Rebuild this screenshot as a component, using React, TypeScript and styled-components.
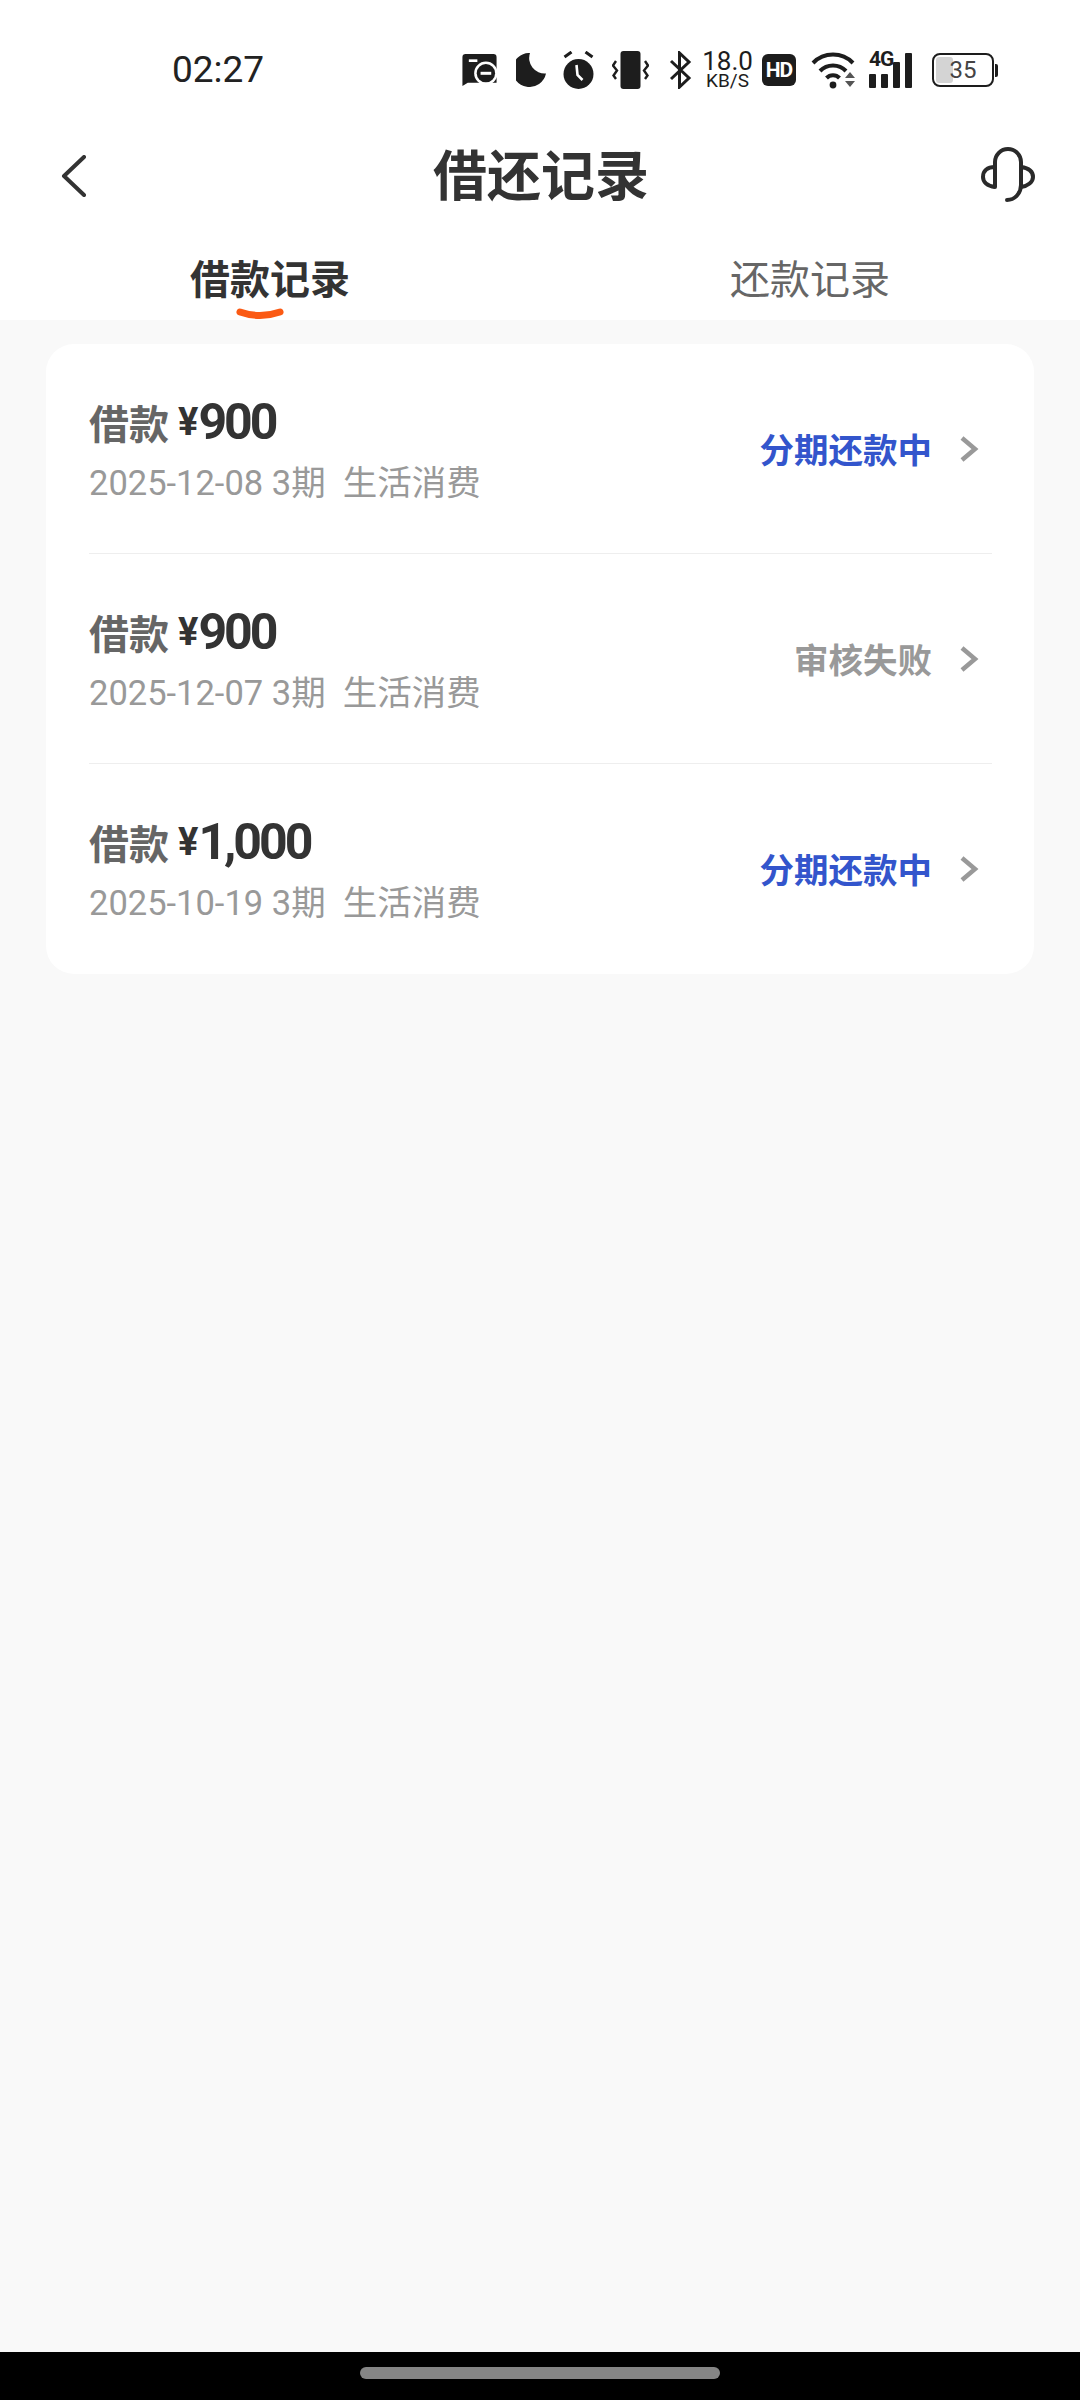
import styled, { createGlobalStyle } from 'styled-components';

const records = [
  { amount: '900', date: '2025-12-08', status: '分期还款中', failed: false },
  { amount: '900', date: '2025-12-07', status: '审核失败', failed: true },
  { amount: '1,000', date: '2025-10-19', status: '分期还款中', failed: false },
];

const App = () => (
  <Page>
    <GlobalStyle />
    <Header>
      <StatusBar>
        <Clock>02:27</Clock>
        <StatusIcons>
          <Slot $gap={0}>
            <svg width="35" height="32" viewBox="0 0 32 30">
              <path d="M3 0H29a3 3 0 0 1 3 3V27H5L0 30V3a3 3 0 0 1 3-3Z" fill="#1d1d1d" />
              <rect x="6" y="5" width="8" height="2.5" fill="#fff" />
              <circle cx="22" cy="18" r="11" fill="#fff" />
              <circle cx="22" cy="18" r="8.6" fill="#1d1d1d" />
              <rect x="17" y="16.7" width="10" height="2.8" fill="#fff" />
            </svg>
          </Slot>
          <Slot $gap={19}>
            <svg width="30" height="34" viewBox="0 0 30 34">
              <path d="M14 0A17 17 0 1 0 30 20.5A15.5 15.5 0 0 1 14 0Z" fill="#1d1d1d" />
            </svg>
          </Slot>
          <Slot $gap={16}>
            <svg width="33" height="38" viewBox="0 0 32 38">
              <circle cx="16" cy="23" r="15" fill="#1d1d1d" />
              <path d="M2 6 9 1M30 6 23 1" stroke="#1d1d1d" strokeWidth="3" />
              <path d="M14 14 15 24 20 29" stroke="#fff" strokeWidth="2.6" fill="none" />
            </svg>
          </Slot>
          <Slot $gap={17}>
            <svg width="37" height="38" viewBox="0 0 37 38">
              <rect x="8.5" y="0" width="20" height="38" rx="3" fill="#1d1d1d" />
              <path d="M4 10 1 14.500 5 19.500 1.500 24.500 4 28M33 10 36 14.500 32 19.500 35.500 24.500 33 28" stroke="#1d1d1d" strokeWidth="2.400" fill="none" />
            </svg>
          </Slot>
          <Slot $gap={20}>
            <svg width="23" height="38" viewBox="0 0 21 38">
              <path d="M1 10 19 27 9.500 36V2L19 11 1 28" stroke="#1d1d1d" strokeWidth="3" fill="none" />
            </svg>
          </Slot>
          <Slot $gap={12}>
            <Speed>
              <SpeedValue>18.0</SpeedValue>
              <SpeedUnit>KB/S</SpeedUnit>
            </Speed>
          </Slot>
          <Slot $gap={11}>
            <HdBadge>HD</HdBadge>
          </Slot>
          <Slot $gap={15}>
            <svg width="46" height="38" viewBox="0 0 44 38">
              <path d="M1 12A28 28 0 0 1 41 12M8 20A18 18 0 0 1 34 20M14.500 27A9 9 0 0 1 27.500 27" stroke="#1d1d1d" strokeWidth="4" fill="none" />
              <circle cx="21" cy="34" r="3.400" fill="#1d1d1d" />
              <path d="M33 27 38 21 43 27ZM33 30H43L38 36Z" fill="#555" />
            </svg>
          </Slot>
          <Slot $gap={12}>
            <Signal>
              <SignalLabel>4G</SignalLabel>
              <SignalBar $height={14} />
              <SignalBar $height={14} />
              <SignalBar $height={26} />
              <SignalBar $height={35} />
            </Signal>
          </Slot>
          <Slot $gap={17}>
            <BatteryBody>
              <BatteryFill />
              <BatteryText>35</BatteryText>
            </BatteryBody>
            <BatteryNub />
          </Slot>
        </StatusIcons>
      </StatusBar>
      <NavBar>
        <BackIcon width="26" height="42" viewBox="0 0 26 42">
          <path d="M23 2 3 21 23 40" stroke="#333" strokeWidth="4" strokeLinecap="round" strokeLinejoin="round" fill="none" />
        </BackIcon>
        <Title>借还记录</Title>
        <HeadsetIcon width="56" height="56" viewBox="0 0 54 56">
          <path d="M14 40V15A13 13 0 0 1 40 15V38C40 46 34 53 26 53" stroke="#2a2a2a" strokeWidth="4" strokeLinecap="round" fill="none" />
          <path d="M14 20C6 20 2 24 2 30C2 35 6 39 14 40M40 20C47 21 52 24 52 30C52 35 47 39 40 40" stroke="#2a2a2a" strokeWidth="4" fill="none" />
        </HeadsetIcon>
      </NavBar>
      <Tabs>
        <Tab>
          <TabLabel $active>
            借款记录
            <TabMark width="48" height="14" viewBox="0 0 48 14">
              <path d="M4 4Q24 11 44 4" stroke="#fb5a14" strokeWidth="7" strokeLinecap="round" fill="none" />
            </TabMark>
          </TabLabel>
        </Tab>
        <Tab>
          <TabLabel>还款记录</TabLabel>
        </Tab>
      </Tabs>
    </Header>
    <Content>
      <Card>
        {records.map((record) => (
          <Row key={record.date}>
            <RowInfo>
              <RowTitle>
                <RowKind>借款</RowKind>
                <Currency>¥</Currency>
                <Amount>{record.amount}</Amount>
              </RowTitle>
              <RowMeta>{record.date} 3期&nbsp;&nbsp;生活消费</RowMeta>
            </RowInfo>
            <RowSide>
              <RowStatus $failed={record.failed}>{record.status}</RowStatus>
              <svg width="20" height="28" viewBox="0 0 20 28">
                <path d="M3 3 16 14 3 25" stroke="#999" strokeWidth="4.500" fill="none" />
              </svg>
            </RowSide>
          </Row>
        ))}
      </Card>
    </Content>
    <BottomBar>
      <HomePill />
    </BottomBar>
  </Page>
);

const GlobalStyle = createGlobalStyle`
  body {
    margin: 0;
    background: #f9f9f9;
    font-family: Roboto, 'Noto Sans CJK SC', sans-serif;
  }
`;

const Page = styled.div`
  width: 1080px;
  height: 2400px;
  display: flex;
  flex-direction: column;
  background: #f9f9f9;
  overflow: hidden;
`;

const Header = styled.header`
  background: #fff;
`;

const StatusBar = styled.div`
  height: 110px;
  box-sizing: border-box;
  padding: 30px 82px 0 172px;
  display: flex;
  align-items: center;
  justify-content: space-between;
`;

const Clock = styled.div`
  font-size: 37px;
  color: #222;
  line-height: 40px;
`;

const StatusIcons = styled.div`
  display: flex;
  align-items: center;
`;

const Slot = styled.div<{ $gap: number }>`
  display: flex;
  align-items: center;
  gap: 1px;
  margin-left: ${(p) => p.$gap}px;
`;

const Speed = styled.div`
  display: flex;
  flex-direction: column;
  align-items: center;
  color: #1d1d1d;
  width: 47px;
`;

const SpeedValue = styled.span`
  font-size: 26px;
  line-height: 22px;
`;

const SpeedUnit = styled.span`
  font-size: 19px;
  line-height: 18px;
`;

const HdBadge = styled.div`
  width: 34px;
  height: 32px;
  border-radius: 6px;
  background: #1d1d1d;
  color: #fff;
  font-size: 21px;
  font-weight: 700;
  letter-spacing: -1px;
  display: flex;
  align-items: center;
  justify-content: center;
`;

const Signal = styled.div`
  position: relative;
  width: 46px;
  height: 36px;
  display: flex;
  align-items: flex-end;
  gap: 5px;
`;

const SignalLabel = styled.span`
  position: absolute;
  left: 0;
  top: -3px;
  font-size: 21px;
  font-weight: 700;
  line-height: 20px;
  letter-spacing: -1px;
  color: #1d1d1d;
`;

const SignalBar = styled.span<{ $height: number }>`
  width: 7px;
  height: ${(p) => p.$height}px;
  border-radius: 1px;
  background: #1d1d1d;
`;

const BatteryBody = styled.div`
  position: relative;
  width: 62px;
  height: 34px;
  box-sizing: border-box;
  border: 2.500px solid #1d1d1d;
  border-radius: 8px;
  display: flex;
  align-items: center;
  justify-content: center;
  overflow: hidden;
`;

const BatteryFill = styled.div`
  position: absolute;
  inset: 2px auto 2px 2px;
  width: 30%;
  border-radius: 3px;
  background: #d4d4d4;
`;

const BatteryText = styled.span`
  position: relative;
  font-size: 24px;
  color: #444;
`;

const BatteryNub = styled.div`
  width: 3px;
  height: 13px;
  background: #1d1d1d;
  border-radius: 0 2px 2px 0;
`;

const NavBar = styled.div`
  height: 124px;
  padding: 0 44px;
  display: grid;
  grid-template-columns: 1fr auto 1fr;
  align-items: center;
`;

const BackIcon = styled.svg`
  margin: 8px 0 0 17px;
`;

const HeadsetIcon = styled.svg`
  justify-self: end;
  margin-top: 5px;
`;

const Title = styled.h1`
  margin: 0 0 0 2px;
  font-family: 'Noto Sans CJK SC', sans-serif;
  font-size: 54px;
  font-weight: 700;
  color: #333;
`;

const Tabs = styled.div`
  height: 86px;
  display: flex;
`;

const Tab = styled.div`
  flex: 1;
  display: flex;
  align-items: center;
  justify-content: center;
`;

const TabLabel = styled.span<{ $active?: boolean }>`
  position: relative;
  font-family: 'Noto Sans CJK SC', sans-serif;
  font-size: 40px;
  line-height: 56px;
  font-weight: ${(p) => (p.$active ? 700 : 400)};
  color: ${(p) => (p.$active ? '#333' : '#666')};
`;

const TabMark = styled.svg`
  position: absolute;
  left: 46px;
  top: 59px;
`;

const Content = styled.main`
  flex: 1;
  padding: 24px 46px 0;
`;

const Card = styled.section`
  background: #fff;
  border-radius: 28px;
  padding: 0 42px 0 43px;
`;

const Row = styled.div`
  height: 209px;
  padding-right: 13px;
  display: flex;
  align-items: center;
  justify-content: space-between;
  border-bottom: 1px solid #eee;

  &:last-child {
    height: 210px;
    border-bottom: none;
  }
`;

const RowInfo = styled.div`
  display: flex;
  flex-direction: column;
  gap: 11px;
  margin-top: 3px;
`;

const RowTitle = styled.div`
  display: flex;
  align-items: center;
  height: 54px;
`;

const RowKind = styled.span`
  font-family: 'Noto Sans CJK SC', sans-serif;
  font-size: 40px;
  font-weight: 700;
  color: #666;
  margin-right: 9px;
`;

const Currency = styled.span`
  font-size: 38px;
  font-weight: 700;
  color: #333;
`;

const Amount = styled.span`
  font-size: 50px;
  font-weight: 700;
  letter-spacing: -3px;
  color: #333;
`;

const RowMeta = styled.div`
  font-size: 34.500px;
  line-height: 46px;
  color: #999;
`;

const RowSide = styled.div`
  display: flex;
  align-items: center;
  gap: 27px;
`;

const RowStatus = styled.span<{ $failed: boolean }>`
  font-family: 'Noto Sans CJK SC', sans-serif;
  font-size: 34.500px;
  font-weight: 700;
  margin-bottom: 2px;
  color: ${(p) => (p.$failed ? '#999' : '#3355cc')};
`;

const BottomBar = styled.div`
  height: 48px;
  background: #000;
  display: flex;
  justify-content: center;
  padding-top: 15px;
  box-sizing: border-box;
`;

const HomePill = styled.div`
  width: 360px;
  height: 12px;
  border-radius: 6px;
  background: #858585;
`;

export default App;
